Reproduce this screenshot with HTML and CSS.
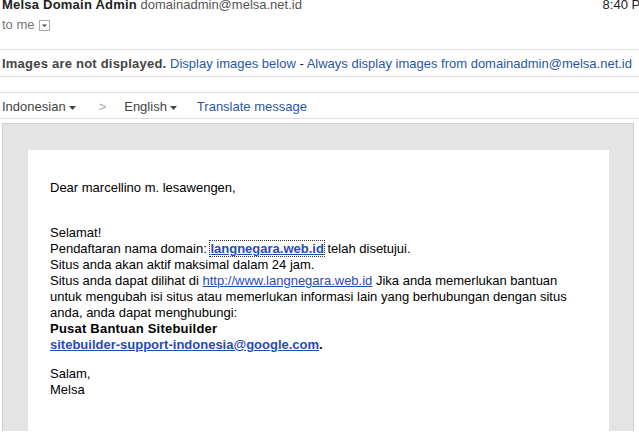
FILE: index.html
```html
<!DOCTYPE html>
<html>
<head>
<meta charset="utf-8">
<link rel="stylesheet" href="styles.css">
</head>
<body>
<div class="page">
  <div class="hdr">
    <div class="from"><b class="name">Melsa Domain Admin</b> <span class="addr">domainadmin@melsa.net.id</span></div>
    <div class="time">8:40 PM</div>
  </div>
  <div class="tome">to me <span class="dd"><svg width="9" height="9" viewBox="0 0 9 9"><path d="M2 3.5h5L4.5 6z" fill="#444"/></svg></span></div>
  <div class="imgbar"><b class="warn">Images are not displayed.</b> <a class="lnk">Display images below</a> - <a class="lnk">Always display images from domainadmin@melsa.net.id</a></div>
  <div class="trans">
    <span class="lang">Indonesian<svg class="tri" width="7" height="4" viewBox="0 0 7 4"><path d="M0 0h7L3.5 4z" fill="#444"/></svg></span>
    <span class="chev">&gt;</span>
    <span class="lang">English<svg class="tri" width="7" height="4" viewBox="0 0 7 4"><path d="M0 0h7L3.5 4z" fill="#444"/></svg></span>
    <a class="lnk tl">Translate message</a>
  </div>
  <div class="frame">
    <div class="mail">
      <p class="dear">Dear marcellino m. lesawengen,</p>
      <p class="para">Selamat!<br>
      Pendaftaran nama domain: <a class="blink focus">langnegara.web.id</a> telah disetujui.<br>
      Situs anda akan aktif maksimal dalam 24 jam.<br>
      Situs anda dapat dilihat di <a class="ulink">http://www.langnegara.web.id</a> Jika anda memerlukan bantuan<br>
      untuk mengubah isi situs atau memerlukan informasi lain yang berhubungan dengan situs<br>
      anda, anda dapat menghubungi:<br>
      <b>Pusat Bantuan Sitebuilder</b><br>
      <a class="blink">sitebuilder-support-indonesia@google.com</a><b>.</b></p>
      <p class="para sig">Salam,<br>Melsa</p>
    </div>
  </div>
</div>
</body>
</html>
```

FILE: styles.css
```css
html, body {
  margin: 0;
  padding: 0;
  overflow: hidden;
  background: #fff;
}
body {
  font-family: "Liberation Sans", Arial, sans-serif;
  font-size: 13px;
  line-height: 16px;
  color: #222;
  width: 639px;
  height: 437px;
}
b { letter-spacing: 0.22px; }
.page {
  overflow: hidden;
  height: 437px;
}
.hdr {
  display: flex;
  justify-content: space-between;
  margin-top: -3px;
  padding-left: 2px;
  height: 16px;
  white-space: nowrap;
}
.name { color: #222; }
.addr { color: #555; }
.time {
  color: #222;
  margin-right: -12px;
}
.tome {
  margin-top: 4px;
  height: 16px;
  padding-left: 2px;
  color: #777;
  padding-bottom: 16px;
  border-bottom: 1px solid #ddd;
  display: flex;
  align-items: center;
}
.dd {
  display: inline-flex;
  width: 9px;
  height: 9px;
  border: 1px solid #aaa;
  margin-left: 4px;
  margin-top: 1px;
  background: #fff;
}
.imgbar {
  height: 16px;
  padding: 6px 0 4px 2px;
  border-bottom: 1px solid #ddd;
  white-space: nowrap;
}
.warn { color: #444; }
.lnk { color: #2a57a5; text-decoration: none; }
.trans {
  margin-top: 15px;
  height: 16px;
  border-top: 1px solid #ddd;
  border-bottom: 1px solid #ddd;
  padding: 6px 0 3px 2px;
  display: flex;
  align-items: center;
  color: #444;
}
.lang {
  display: inline-flex;
  align-items: center;
}
.tri {
  margin-left: 3px;
  margin-top: 1px;
}
.chev {
  color: #aaa;
  margin-left: 23px;
  margin-right: 18px;
}
.tl { margin-left: 20px; }
.frame {
  margin: 4px 5px 0 2px;
  border: 1px solid #cfcfcf;
  border-bottom: none;
  background: #e4e4e4;
  padding: 26px 24px 0 25px;
}
.mail {
  box-sizing: border-box;
  height: 281px;
  background: #fff;
  padding: 30px 22px 0 22px;
  color: #000;
}
.mail p { margin: 0; }
.dear { margin-bottom: 29px !important; }
.sig { margin-top: 13px !important; }
.blink {
  color: #1a4fb4;
  font-weight: bold;
  text-decoration: underline;
  letter-spacing: 0;
}
.ulink {
  color: #1a4fb4;
  text-decoration: underline;
}
.focus {
  outline: 1px dotted #333;
  outline-offset: 0;
}
```
